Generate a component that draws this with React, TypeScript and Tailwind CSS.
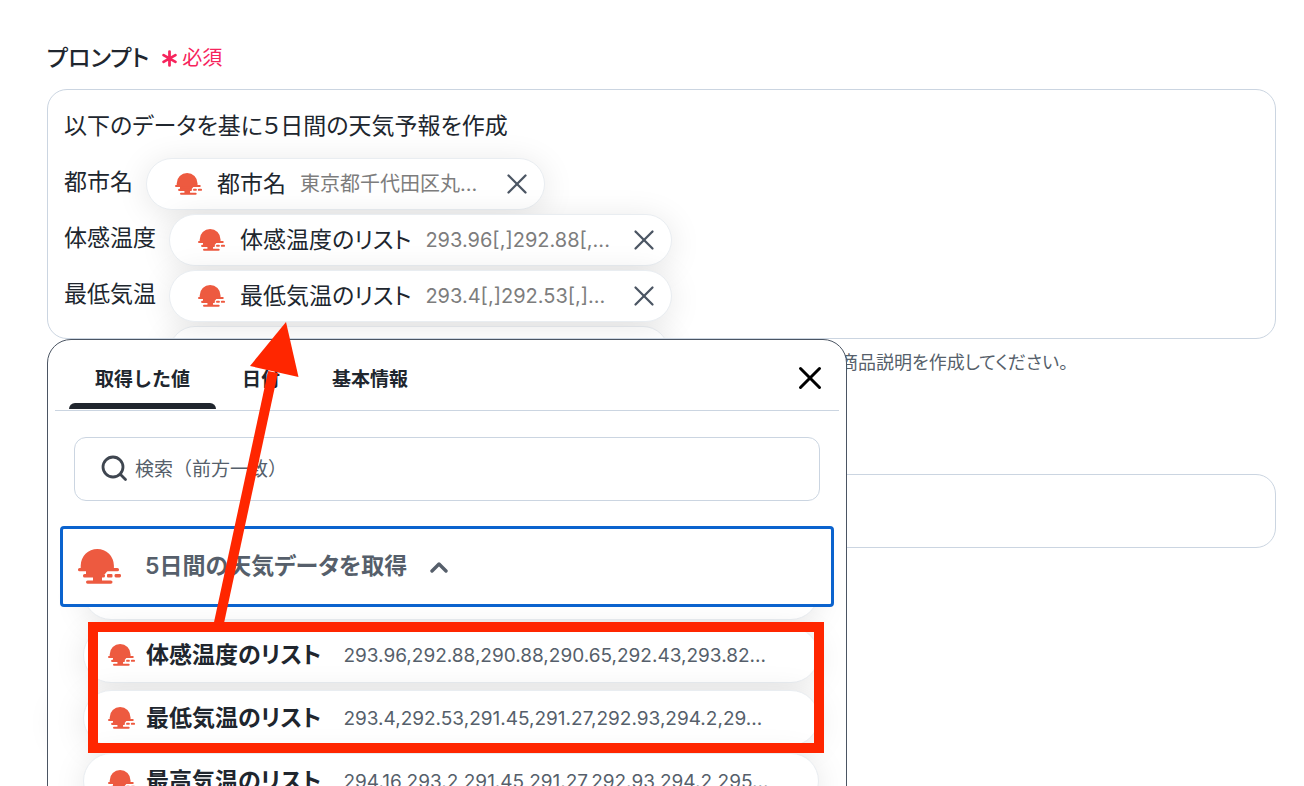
import { X } from "lucide-react";

const jp = "font-['Inter','Noto_Sans_CJK_JP',sans-serif]";

function SunIcon({ className }: { className: string }) {
  return (
    <svg viewBox="0 0 43 35" className={className} fill="#ed5a40" aria-hidden="true">
      <path d="M2.700 20v-3.400a16.600 16.600 0 0 1 33.200 0V20z" />
      <rect x="0" y="19" width="41" height="3.300" rx="1.600" />
      <path d="M8 22h21.500l-3 3.400H8z" />
      <rect x="5" y="25" width="22" height="3.500" rx="1.600" />
      <rect x="29" y="25" width="5.500" height="3.400" rx="1" />
      <rect x="36.500" y="25" width="6.500" height="3.400" rx="1.400" />
      <path d="M15 28h9v4h-9z" />
      <rect x="8" y="31.500" width="26.500" height="3.200" rx="1.600" />
    </svg>
  );
}

function SearchIcon() {
  return (
    <svg viewBox="0 0 28 28" className="size-7 shrink-0 text-[#3f4650]" fill="none" stroke="currentColor" strokeWidth="2.800" strokeLinecap="round" aria-hidden="true">
      <circle cx="12" cy="12" r="10" />
      <path d="m19.500 19.500 5 5" />
    </svg>
  );
}

const chips = [
  { label: "都市名", name: "都市名", value: "東京都千代田区丸...", width: "w-[186px]" },
  { label: "体感温度", name: "体感温度のリスト", value: "293.96[,]292.88[,...", width: "w-[188px]" },
  { label: "最低気温", name: "最低気温のリスト", value: "293.4[,]292.53[,]...", width: "w-[188px]" },
];

const values = [
  { name: "体感温度のリスト", value: "293.96,292.88,290.88,290.65,292.43,293.82..." },
  { name: "最低気温のリスト", value: "293.4,292.53,291.45,291.27,292.93,294.2,29..." },
  { name: "最高気温のリスト", value: "294.16,293.2,291.45,291.27,292.93,294.2,295..." },
];

const tabs = ["取得した値", "日付", "基本情報"];

const pill = "rounded-full border border-[#e9edf1] bg-white shadow-[0_4px_32px_rgba(0,0,0,0.1)]";

function Picker() {
  return (
    <section className="absolute left-0 top-full h-[600px] w-[800px] overflow-hidden rounded-t-[24px] border border-[#4b5563] bg-white px-[7px] pt-3">
      <div className="flex items-start justify-between border-b border-[#cbd5e1] px-3.5">
        <div role="tablist" className="flex text-[19px] font-bold">
          {tabs.map((tab, i) => (
            <button key={tab} role="tab" aria-selected={i === 0} className="flex flex-col pb-px pt-[5px]">
              <span className="px-[26px] leading-[46px]">{tab}</span>
              <span className={i === 0 ? "h-1.5 w-full rounded-t-md bg-[#20262e]" : "h-1.5 w-full"} />
            </button>
          ))}
        </div>
        <button aria-label="閉じる" className="-mr-1 pt-[7px] text-black">
          <X size={38} strokeWidth={1.9} />
        </button>
      </div>
      <label className="mx-[19px] mt-[26px] flex h-16 items-center gap-1.5 rounded-xl border border-[#cbd5e1] px-[26px]">
        <SearchIcon />
        <input
          aria-label="検索"
          placeholder="検索（前方一致）"
          className="w-full pt-[3px] text-[19px] outline-none placeholder:text-[#565f6b]"
        />
      </label>
      <div className="relative z-10 mx-[5px] mt-[25px] flex">
        <button className="flex h-[81px] flex-1 items-center rounded-[4px] border-3 border-[#0b63ce] bg-white pl-[15px] text-[23px] font-semibold text-[#565f6b] [font-feature-settings:'palt']">
          <SunIcon className="h-[35px] w-[43px]" />
          <span className="ml-6">5日間の天気データを取得</span>
          <svg viewBox="0 0 18 12" className="ml-[23px] h-3 w-[18px]" fill="none" stroke="#565f6b" strokeWidth="3.400" strokeLinecap="round" strokeLinejoin="round">
            <path d="M2 10 9 3l7 7" />
          </svg>
        </button>
      </div>
      <ul className="-mt-[43px] flex flex-col gap-[7px] pl-7 pr-5">
        <li className={`h-14 ${pill}`} />
        {values.map((v) => (
          <li key={v.name}>
            <button className={`flex h-14 w-full items-center pl-6 ${pill}`}>
              <SunIcon className="h-[22px] w-[27px]" />
              <span className="ml-[11px] text-[23px] font-bold [font-feature-settings:'palt']">{v.name}</span>
              <span className="ml-[22px] pt-0.5 text-[19px] text-[#565f6b]">{v.value}</span>
            </button>
          </li>
        ))}
      </ul>
    </section>
  );
}

export default function App() {
  return (
    <main className={`relative h-screen overflow-hidden bg-white pl-[47px] pr-7 pt-10 text-[#20262e] ${jp}`}>
      <h2 className="flex h-9 items-center gap-3 text-[23px] font-medium [font-feature-settings:'palt']">
        プロンプト
        <span className="flex items-center gap-1 text-[20px] font-normal text-[#f6245c]">
          <svg viewBox="0 0 16 16" className="size-[17px]" stroke="#f6245c" strokeWidth="2.600" strokeLinecap="round">
            <path d="M8 1.500v13M2.400 4.800l11.200 6.400M13.600 4.800 2.400 11.200" />
          </svg>
          必須
        </span>
      </h2>
      <div className="relative mt-[13px]">
        <div className="h-[250px] overflow-hidden rounded-[20px] border border-[#cbd5e1] px-4 pt-2 text-[23px] leading-[56px] [font-feature-settings:'palt']">
          <p>以下のデータを基に５日間の天気予報を作成</p>
          {chips.map((c) => (
            <div key={c.name} className="flex h-14 items-start gap-[13px]">
              <span>{c.label}</span>
              <span className={`mt-1 flex h-[52px] items-center pl-7 pr-2.5 leading-[50px] ${pill}`}>
                <SunIcon className="h-[22px] w-[27px]" />
                <span className="ml-[15px]">{c.name}</span>
                <span className={`ml-3.5 whitespace-nowrap text-[20px] text-[#7d7d7d] ${c.width}`}>{c.value}</span>
                <button aria-label="削除" className="ml-3.5 text-[#4b5563]">
                  <X size={34} strokeWidth={1.6} />
                </button>
              </span>
            </div>
          ))}
          <div className={`ml-[105px] mt-1 h-[52px] w-[500px] ${pill}`} />
        </div>
        <div className="absolute left-2.5 top-[610px] h-12 w-40 rounded-full shadow-[0_0_32px_rgba(0,0,0,0.1)]" />
        <Picker />
      </div>
      <p className="mt-2 pr-[208px] text-right text-[18px] leading-8 text-[#565f6b] [font-feature-settings:'palt']">商品説明を作成してください。</p>
      <input aria-label="入力" className="mt-[95px] block h-[74px] w-full rounded-[20px] border border-[#cbd5e1] px-4" />
      <svg viewBox="0 0 1304 786" className="pointer-events-none absolute left-0 top-0 z-20 h-[786px] w-[1304px]" fill="none" stroke="#ff2600" strokeWidth="10" aria-hidden="true">
        <path d="M93 627H819V748H93z" />
        <path d="M218.500 625 273 372" />
        <path d="M286 322 298.500 377 250 366z" fill="#ff2600" stroke="none" />
      </svg>
    </main>
  );
}
